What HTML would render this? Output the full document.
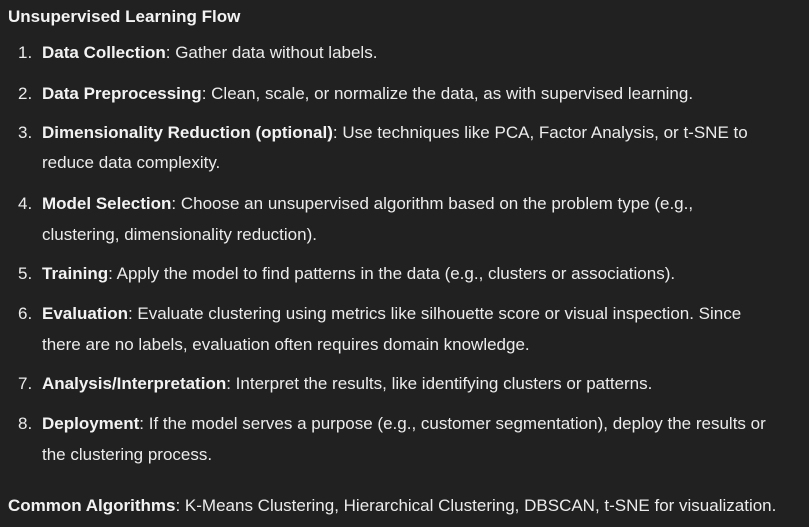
<!DOCTYPE html>
<html><head><meta charset="utf-8"><style>
html,body{margin:0;padding:0;background:#212121;}
body{width:809px;height:527px;position:relative;overflow:hidden;color:#ececec;font-family:"Liberation Sans",sans-serif;font-size:17px;}
.l{position:absolute;left:42px;line-height:20px;white-space:nowrap;}
.n{position:absolute;left:18px;line-height:20px;}
b{font-weight:bold;color:#f3f3f3;}
</style></head><body>
<div class="l" style="left:8px;top:7px;font-size:17px"><b>Unsupervised Learning Flow</b></div>
<div class="n" style="top:43px">1.</div><div class="l" style="top:43px"><b>Data Collection</b>: Gather data without labels.</div>
<div class="n" style="top:84px">2.</div><div class="l" style="top:84px"><b>Data Preprocessing</b>: Clean, scale, or normalize the data, as with supervised learning.</div>
<div class="n" style="top:123px">3.</div><div class="l" style="top:123px"><b>Dimensionality Reduction (optional)</b>: Use techniques like PCA, Factor Analysis, or t-SNE to</div>
<div class="l" style="top:153px">reduce data complexity.</div>
<div class="n" style="top:194px">4.</div><div class="l" style="top:194px"><b>Model Selection</b>: Choose an unsupervised algorithm based on the problem type (e.g.,</div>
<div class="l" style="top:225px">clustering, dimensionality reduction).</div>
<div class="n" style="top:264px">5.</div><div class="l" style="top:264px"><b>Training</b>: Apply the model to find patterns in the data (e.g., clusters or associations).</div>
<div class="n" style="top:304px">6.</div><div class="l" style="top:304px"><b>Evaluation</b>: Evaluate clustering using metrics like silhouette score or visual inspection. Since</div>
<div class="l" style="top:335px">there are no labels, evaluation often requires domain knowledge.</div>
<div class="n" style="top:374px">7.</div><div class="l" style="top:374px"><b>Analysis/Interpretation</b>: Interpret the results, like identifying clusters or patterns.</div>
<div class="n" style="top:414px">8.</div><div class="l" style="top:414px"><b>Deployment</b>: If the model serves a purpose (e.g., customer segmentation), deploy the results or</div>
<div class="l" style="top:445px">the clustering process.</div>
<div class="l" style="left:8px;top:496px"><b>Common Algorithms</b>: K-Means Clustering, Hierarchical Clustering, DBSCAN, t-SNE for visualization.</div>
</body></html>
